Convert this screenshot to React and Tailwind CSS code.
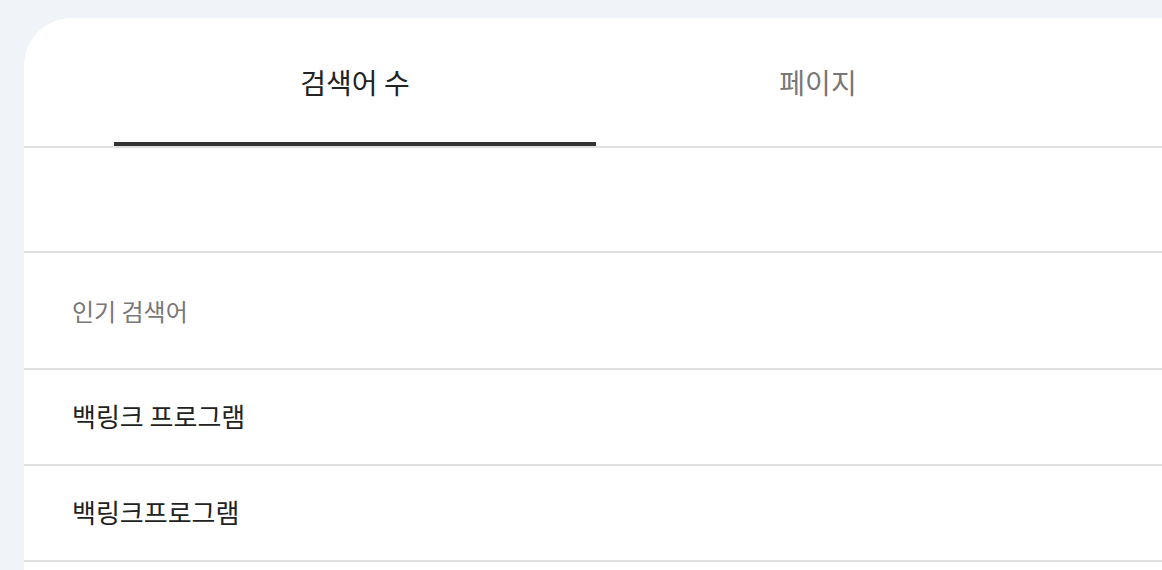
import React from 'react';

const rows = ['백링크 프로그램', '백링크프로그램'];

const App = () => {
  return (
    <div
      className="w-[1162px] h-[570px] overflow-hidden bg-[#f0f3f8] pt-[18px] pl-6"
      style={{ fontFamily: '"Noto Sans CJK KR", "Noto Sans", sans-serif' }}
    >
      <div className="w-[1200px] min-h-[600px] bg-white rounded-tl-[48px]">
        {/* Tabs */}
        <div className="flex pl-[90px] h-[128px] border-b-2 border-[#e0e0e0] box-content">
          <div className="w-[482px] flex items-center justify-center border-b-4 border-[#333333] pt-1">
            <span className="text-[28px] text-[#222222]">검색어 수</span>
          </div>
          <div className="w-[444px] flex items-center justify-center border-b-4 border-transparent pt-1">
            <span className="text-[28px] text-[#777777]">페이지</span>
          </div>
        </div>

        {/* Spacer */}
        <div className="h-[103px] border-b-2 border-[#e0e0e0] box-content" />

        {/* Header */}
        <div className="h-[115px] flex items-center px-12 border-b-2 border-[#e0e0e0] box-content">
          <span className="text-[24px] text-[#777777]">인기 검색어</span>
        </div>

        {/* Keyword rows */}
        {rows.map((row) => (
          <div
            key={row}
            className="h-[94px] flex items-center px-12 border-b-2 border-[#e0e0e0] box-content"
          >
            <span className="text-[26px] text-[#222222] -mt-1">{row}</span>
          </div>
        ))}
      </div>
    </div>
  );
};

export default App;
